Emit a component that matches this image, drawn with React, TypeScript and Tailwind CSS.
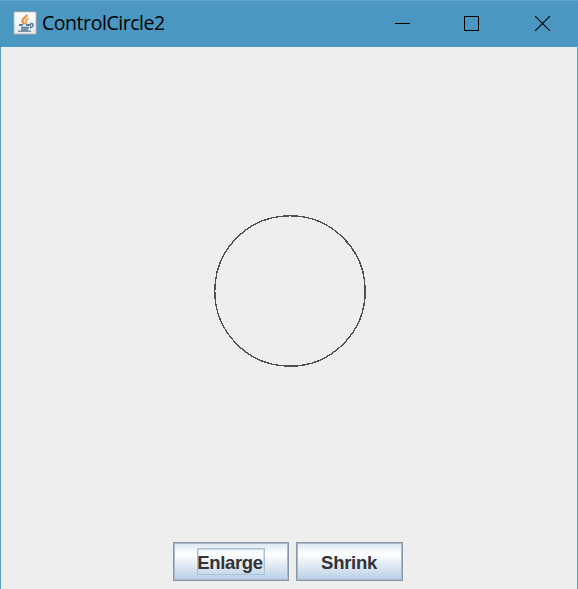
import React from "react";

function JavaIcon() {
  return (
    <svg width="24" height="24" viewBox="0 0 24 24" fill="none" className="shrink-0">
      <defs>
        <linearGradient id="tile" x1="0" y1="0" x2="0" y2="1">
          <stop offset="0" stopColor="#ffffff" />
          <stop offset="1" stopColor="#e6eaee" />
        </linearGradient>
      </defs>
      <rect x="0.7" y="0.7" width="22.6" height="22.6" rx="1" fill="url(#tile)" stroke="#8b9dac" strokeWidth="1.2" />
      <path d="M13.6 3.5C14.4 6.2 9 7.2 9.3 9.8C9.6 11.4 11 12 11.2 13.4" stroke="#ef8d3c" strokeWidth="2.2" />
      <path d="M16 7.2C13.5 8.4 12 9.4 13 10.8C14 12 13.3 12.7 12.5 13.4" stroke="#f0a05c" strokeWidth="1.8" />
      <path d="M6 14H10M13 14H18M8 16.8H16" stroke="#5d809e" strokeWidth="1.9" />
      <path d="M17 12.8C21 11.8 21 15.5 16.8 16.9" stroke="#5d809e" strokeWidth="1.7" />
      <path d="M5 20.3H18M8 18.7H15" stroke="#7590a6" strokeWidth="1.5" />
    </svg>
  );
}

function TitleBar() {
  return (
    <header className="flex h-[47px] shrink-0 items-center border-t border-[#63a5c7] bg-[#4a98c1] pb-[2px] pl-[13px] text-black">
      <JavaIcon />
      <h1 className="ml-[5px] w-[320px] whitespace-nowrap font-['Open_Sans',sans-serif] text-[19.5px] font-normal leading-[26px] tracking-[-0.45px]">
        ControlCircle2
      </h1>
      <div className="ml-[33px] flex items-center gap-[54px]" aria-label="Window controls">
        <svg width="15" height="15" shapeRendering="crispEdges">
          <path d="M0 7.5H15" stroke="currentColor" />
        </svg>
        <svg width="15" height="15" shapeRendering="crispEdges" fill="none">
          <rect x="0.5" y="0.5" width="14" height="14" stroke="currentColor" />
        </svg>
        <svg width="15" height="15" className="ml-[2px]">
          <path d="M0 0L15 15M15 0L0 15" stroke="currentColor" strokeWidth="1.1" />
        </svg>
      </div>
    </header>
  );
}

function MetalButton({ label, size, text, focused = false }: { label: string; size: string; text: string; focused?: boolean }) {
  return (
    <button
      className={`flex h-[39px] items-center justify-center border-[1.5px] border-[#8496a8] bg-linear-to-b from-[#dce7f0] via-[#ffffff] via-30% to-[#b8cfe5] font-['Liberation_Sans',sans-serif] text-[18.5px] font-bold leading-[24px] text-[#333333] shadow-[inset_0_0_0_1px_#a9b9c8] ${size}`}
    >
      <span className={`flex h-[27px] items-center justify-center border pt-[2px] ${text} ${focused ? "border-[#a9c1d9] shadow-[inset_0_0_0_1px_#cbdae8]" : "border-transparent"}`}>
        {label}
      </span>
    </button>
  );
}

export default function App() {
  return (
    <div className="flex h-[589px] w-[578px] flex-col overflow-hidden bg-[#eeeeee]">
      <TitleBar />
      <main className="flex flex-1 flex-col border-x border-[#5aa0c4]">
        <div className="flex h-[495px] justify-center pt-[167px]">
          <svg width="154" height="154" viewBox="0 0 154 154" fill="none">
            <circle cx="78" cy="77" r="75.2" stroke="#505050" strokeWidth="1.35" shapeRendering="crispEdges" />
          </svg>
        </div>
        <div className="flex gap-[7px] pl-[172px]">
          <MetalButton label="Enlarge" size="w-[116px]" text="w-[68px] pr-[2px] tracking-[-0.35px]" focused />
          <MetalButton label="Shrink" size="w-[107px]" text="w-[60px] pr-[1px] tracking-[-0.3px]" />
        </div>
      </main>
    </div>
  );
}
